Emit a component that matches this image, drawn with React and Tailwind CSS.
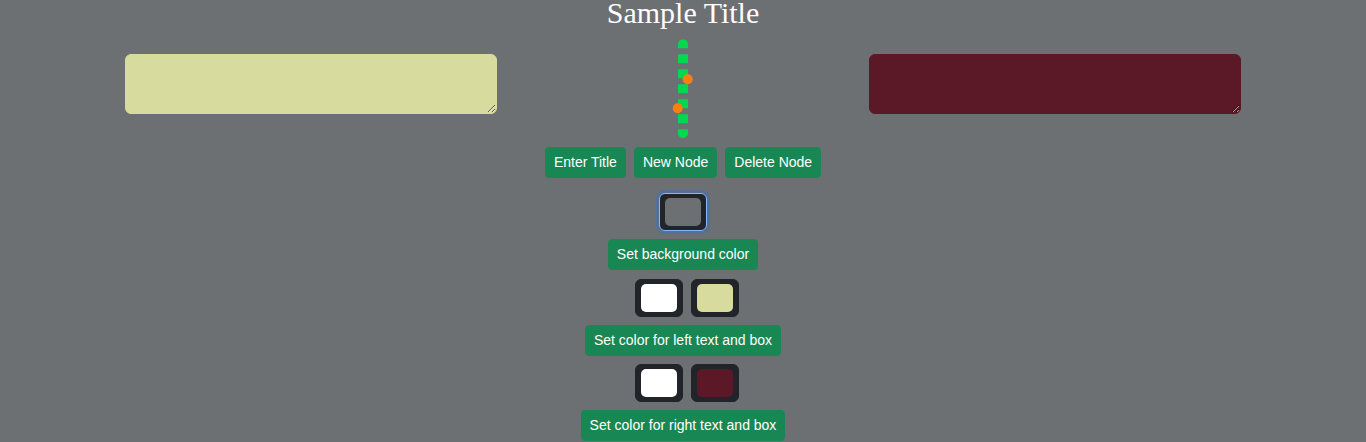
import React from "react";

const BG = "#6c7073";

function Swatch({ color, focused }) {
  return (
    <div
      className={
        "w-12 h-[38px] rounded-md bg-[#212529] px-[5px] py-[4px] border " +
        (focused
          ? "border-[#86b7fe] shadow-[0_0_0_3px_rgba(13,110,253,0.25)]"
          : "border-[#212529]")
      }
    >
      <div className="w-full h-full rounded-[5px]" style={{ backgroundColor: color }} />
    </div>
  );
}

function Btn({ children }) {
  return (
    <button className="h-[31px] px-2 rounded-[4px] bg-[#198754] text-white text-[14px] leading-[21px] border border-[#198754]">
      {children}
    </button>
  );
}

function Line() {
  return (
    <svg width="40" height="100" viewBox="0 0 40 100" className="block">
      <defs>
        <clipPath id="lc">
          <rect x="15" y="0.3" width="10" height="99" rx="5" />
        </clipPath>
      </defs>
      <g clipPath="url(#lc)">
        <line x1="20" y1="0.3" x2="20" y2="99.3" stroke="#00d850" strokeWidth="10" strokeDasharray="9 6" />
      </g>
      <circle cx="24.7" cy="40.3" r="5" fill="#ff7f0e" />
      <circle cx="14.7" cy="69.3" r="5" fill="#ff7f0e" />
    </svg>
  );
}

export default function App() {
  return (
    <div
      className="w-[1366px] h-[442px] bg-[#6c7073] overflow-hidden flex flex-col items-center"
      style={{ fontFamily: '"Liberation Sans", Arial, sans-serif' }}
    >
      <div
        className="text-white text-[30px] leading-[28px] h-[28px] mt-[-1px]"
        style={{ fontFamily: '"Liberation Serif", "Times New Roman", serif' }}
      >
        Sample Title
      </div>
      <div className="mt-[12px] grid grid-cols-[372px_372px_372px] items-start">
        <textarea
          rows={2}
          className="mt-[15px] h-[60px] w-[372px] rounded-md bg-[#d7db9e] border border-[#d7db9e] outline-none"
        />
        <div className="flex justify-center">
          <Line />
        </div>
        <textarea
          rows={2}
          className="mt-[15px] h-[60px] w-[372px] rounded-md bg-[#5b1826] border border-[#5b1826] outline-none"
        />
      </div>
      <div className="mt-[8px] flex gap-2">
        <Btn>Enter Title</Btn>
        <Btn>New Node</Btn>
        <Btn>Delete Node</Btn>
      </div>
      <div className="mt-[15px]">
        <Swatch color={BG} focused />
      </div>
      <div className="mt-2">
        <Btn>Set background color</Btn>
      </div>
      <div className="mt-[9px] flex gap-2 pl-2">
        <Swatch color="#ffffff" />
        <Swatch color="#d7db9e" />
      </div>
      <div className="mt-2">
        <Btn>Set color for left text and box</Btn>
      </div>
      <div className="mt-2 flex gap-2 pl-2">
        <Swatch color="#ffffff" />
        <Swatch color="#5b1826" />
      </div>
      <div className="mt-2">
        <Btn>Set color for right text and box</Btn>
      </div>
    </div>
  );
}
